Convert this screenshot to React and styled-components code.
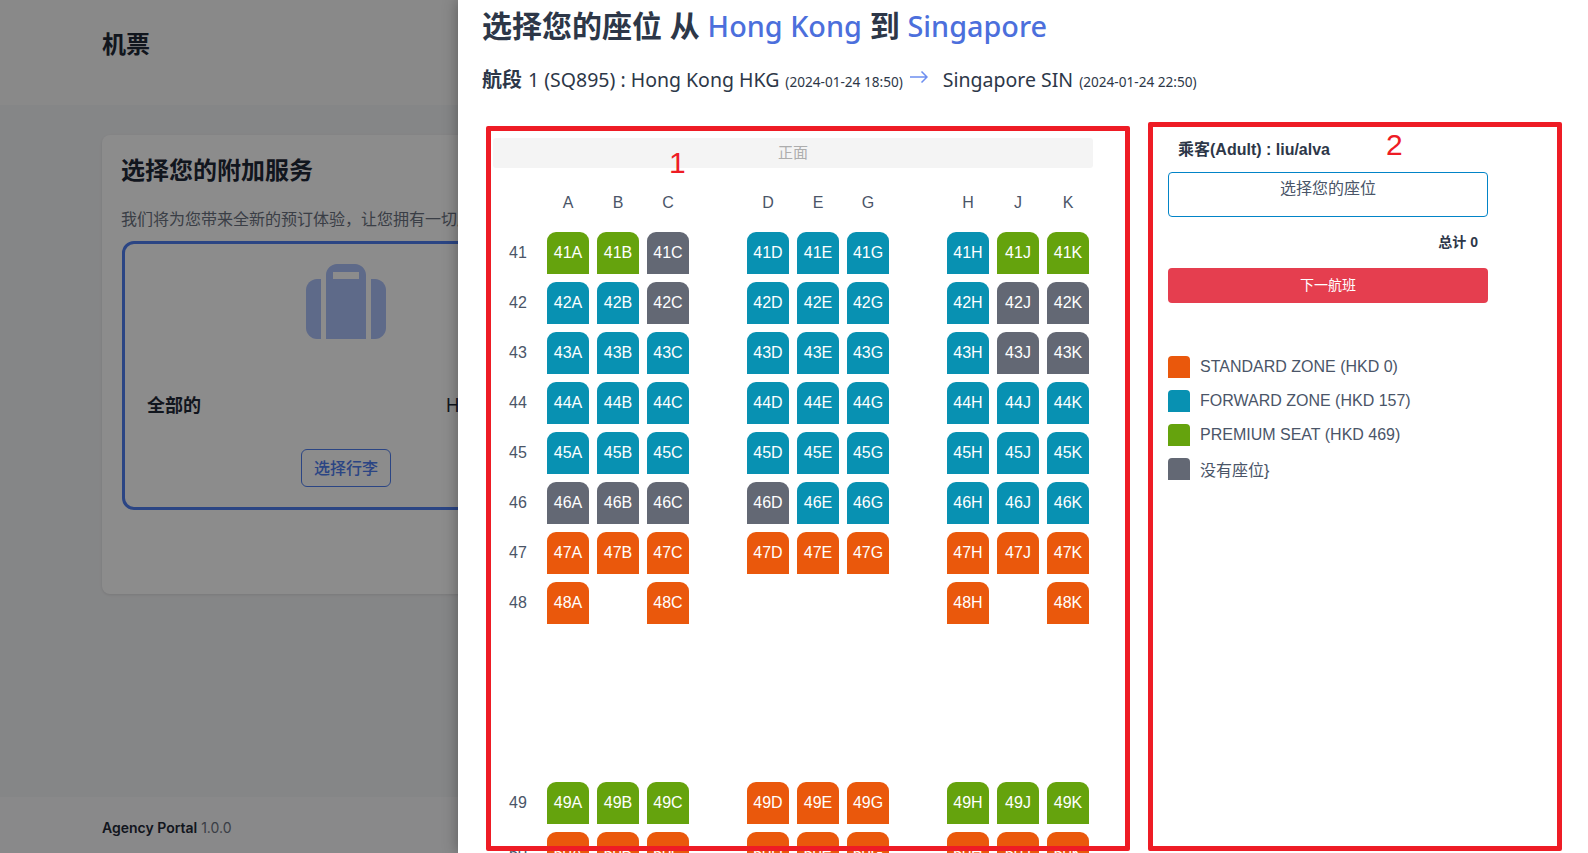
import styled, { createGlobalStyle } from "styled-components";

const SEAT_COLORS = {
  g: "#65a30d",
  t: "#0891b2",
  x: "#636874",
  o: "#ea580c",
};

const LETTERS = ["A", "B", "C", null, "D", "E", "G", null, "H", "J", "K"];

// one string per row, space = no seat, | = aisle
const ROWS = [
  { no: 41, seats: "ggx|ttt|tgg" },
  { no: 42, seats: "ttx|ttt|txx" },
  { no: 43, seats: "ttt|ttt|txx" },
  { no: 44, seats: "ttt|ttt|ttt" },
  { no: 45, seats: "ttt|ttt|ttt" },
  { no: 46, seats: "xxx|xtt|ttt" },
  { no: 47, seats: "ooo|ooo|ooo" },
  { no: 48, seats: "o o|   |o o" },
  { no: null, seats: "   |   |   " },
  { no: null, seats: "   |   |   " },
  { no: null, seats: "   |   |   " },
  { no: 49, seats: "ggg|ooo|ggg" },
  { no: 50, seats: "ooo|ooo|ooo" },
];

const LEGEND = [
  { color: "o", label: "STANDARD ZONE (HKD 0)" },
  { color: "t", label: "FORWARD ZONE (HKD 157)" },
  { color: "g", label: "PREMIUM SEAT (HKD 469)" },
  { color: "x", label: "没有座位}" },
];

function App() {
  return (
    <Screen>
      <GlobalStyle />
      <Page>
        <PageHeader>
          <PageTitle>机票</PageTitle>
        </PageHeader>
        <PageBody>
          <Card>
            <CardTitle>选择您的附加服务</CardTitle>
            <CardText>我们将为您带来全新的预订体验，让您拥有一切所需的服务</CardText>
            <ServiceBox>
              <BagIcon viewBox="0 0 80 75">
                <path d="M15 15H11C5 15 0 20 0 26V64C0 70 5 75 11 75H15Z" />
                <path fillRule="evenodd" d="M20 75V11C20 5 25 0 31 0H49C55 0 60 5 60 11V75ZM27 8V15H53V8Z" />
                <path d="M65 15H69C75 15 80 20 80 26V64C80 70 75 75 69 75H65Z" />
              </BagIcon>
              <ServiceRow>
                <ServiceName>全部的</ServiceName>
                <ServicePrice>HKD 0</ServicePrice>
              </ServiceRow>
              <BagButton>选择行李</BagButton>
            </ServiceBox>
          </Card>
        </PageBody>
        <PageFooter>
          <b>Agency Portal</b>&nbsp;1.0.0
        </PageFooter>
      </Page>
      <Overlay />
      <Drawer>
        <DrawerTitle>
          选择您的座位 从 <City>Hong Kong</City> 到 <City>Singapore</City>
        </DrawerTitle>
        <Segment>
          <b>航段</b> 1 (SQ895) : Hong Kong HKG <small>(2024-01-24 18:50)</small>
          <Arrow viewBox="0 0 18 12" fill="none">
            <path d="M0 6H17M11.5 .5L17 6L11.5 11.5" />
          </Arrow>
          Singapore SIN <small>(2024-01-24 22:50)</small>
        </Segment>
        <Columns>
          <SeatColumn>
            <Front>正面</Front>
            <SeatGrid>
              <span />
              {LETTERS.map((l, i) => (
                <HeadCell key={i}>{l}</HeadCell>
              ))}
              {ROWS.map((row, r) => (
                <SeatRow key={r} row={row} />
              ))}
            </SeatGrid>
          </SeatColumn>
          <SideColumn>
            <Passenger>乘客(Adult) : liu/alva</Passenger>
            <SeatBox>选择您的座位</SeatBox>
            <Total>总计 0</Total>
            <NextButton>下一航班</NextButton>
            <Legend>
              {LEGEND.map((item) => (
                <LegendRow key={item.label}>
                  <Swatch $kind={item.color} />
                  {item.label}
                </LegendRow>
              ))}
            </Legend>
          </SideColumn>
        </Columns>
      </Drawer>
      <MarkSeats />
      <MarkSide />
      <MarkNoSeats>1</MarkNoSeats>
      <MarkNoSide>2</MarkNoSide>
    </Screen>
  );
}

function SeatRow({ row }) {
  return (
    <>
      <HeadCell>{row.no}</HeadCell>
      {row.seats.split("").map((c, i) =>
        c === " " || c === "|" ? (
          <span key={i} />
        ) : (
          <Seat key={i} $kind={c}>
            {row.no}
            {LETTERS[i]}
          </Seat>
        )
      )}
    </>
  );
}

export default App;

const GlobalStyle = createGlobalStyle`
  html, body {
    margin: 0;
    padding: 0;
    height: 100%;
    overflow: hidden;
  }
  * {
    box-sizing: border-box;
  }
`;

const Screen = styled.div`
  position: relative;
  height: 853px;
  overflow: hidden;
  font-family: Inter, "Noto Sans CJK SC", sans-serif;
`;

const Page = styled.div`
  display: flex;
  flex-direction: column;
  height: 100%;
  background: #f3f4f6;
`;

const PageHeader = styled.header`
  display: flex;
  align-items: center;
  height: 105px;
  padding: 0 102px 21px;
  background: #fafafa;
`;

const PageTitle = styled.h1`
  margin: 0;
  font-size: 24px;
  font-weight: 700;
  color: #1f2937;
`;

const PageBody = styled.main`
  flex: 1;
  padding: 30px 102px 0;
`;

const Card = styled.section`
  height: 459px;
  padding: 20px 19px;
  border-radius: 8px;
  background: #fff;
  box-shadow: 0 1px 3px rgba(0, 0, 0, 0.1);
`;

const CardTitle = styled.h2`
  margin: 0;
  font-size: 24px;
  line-height: 32px;
  font-weight: 700;
  color: #1f2937;
`;

const CardText = styled.p`
  margin: 20px 0 0;
  font-size: 16px;
  line-height: 24px;
  white-space: nowrap;
  color: #6b7280;
`;

const ServiceBox = styled.div`
  display: flex;
  flex-direction: column;
  align-items: center;
  width: 448px;
  height: 269px;
  margin: 10px 0 0 1px;
  padding: 20px 22px;
  border: 3px solid #4f7ef0;
  border-radius: 12px;
`;

const BagIcon = styled.svg`
  flex: none;
  width: 80px;
  height: 75px;
  fill: #acc1fa;
`;

const ServiceRow = styled.div`
  display: flex;
  justify-content: space-between;
  width: 100%;
  margin-top: 53px;
`;

const ServiceName = styled.span`
  font-size: 18px;
  line-height: 28px;
  font-weight: 700;
  color: #1f2937;
`;

const ServicePrice = styled.span`
  width: 99px;
  font-size: 18px;
  line-height: 28px;
  color: #1f2937;
`;

const BagButton = styled.button`
  width: 90px;
  height: 38px;
  margin-top: 29px;
  padding: 0 0 2px;
  border: 1px solid #4f7ef0;
  border-radius: 6px;
  background: transparent;
  font: inherit;
  font-size: 16px;
  font-weight: 500;
  color: #4f7ef0;
`;

const PageFooter = styled.footer`
  display: flex;
  align-items: center;
  height: 56px;
  padding: 4px 102px 0;
  background: #f9fafb;
  font-size: 14px;
  color: #6b7280;

  b {
    font-weight: 600;
    color: #1f2937;
  }
`;

const Overlay = styled.div`
  position: absolute;
  inset: 0;
  background: rgba(0, 0, 0, 0.45);
`;

const Drawer = styled.aside`
  position: absolute;
  top: 0;
  right: 0;
  bottom: 0;
  width: 1130px;
  padding: 8px 0 0 24px;
  overflow: hidden;
  background: #fff;
  box-shadow: 0 0 14px rgba(0, 0, 0, 0.35);
  font-family: "Noto Sans", "Noto Sans CJK SC", sans-serif;
`;

const DrawerTitle = styled.h2`
  height: 36px;
  margin: 0;
  font-size: 30px;
  line-height: 36px;
  font-weight: 600;
  color: #2d3748;
  white-space: nowrap;
`;

const City = styled.span`
  font-size: 28.8px;
  font-weight: 500;
  color: #4c6fdc;
`;

const Segment = styled.div`
  display: flex;
  align-items: baseline;
  gap: 6px;
  height: 28px;
  margin-top: 22px;
  font-size: 19.5px;
  line-height: 28px;
  color: #2d3748;
  white-space: nowrap;

  b {
    font-size: 20px;
    font-weight: 700;
  }

  small {
    font-size: 13.6px;
  }
`;

const Arrow = styled.svg`
  align-self: center;
  width: 18px;
  height: 12px;
  margin: 0 9px 6px 1px;
  stroke: #6d8ff0;
  stroke-width: 1.5;
`;

const Columns = styled.div`
  display: flex;
  gap: 75px;
  margin: 44px 0 0 11px;
`;

const SeatColumn = styled.div`
  width: 600px;
`;

const Front = styled.div`
  height: 30px;
  border-radius: 3px;
  background: #f4f4f4;
  font-size: 15px;
  line-height: 28px;
  text-align: center;
  color: #adadad;
`;

const SeatGrid = styled.div`
  display: grid;
  grid-template-columns: repeat(12, 42px);
  grid-auto-rows: 42px;
  gap: 8px;
  margin: 14px 0 0 4px;
  font-family: "Liberation Sans", sans-serif;
`;

const HeadCell = styled.div`
  display: flex;
  align-items: center;
  justify-content: center;
  font-size: 16px;
  color: #4a5568;
`;

const Seat = styled.div`
  display: flex;
  align-items: center;
  justify-content: center;
  border-radius: 9px 9px 0 0;
  background: ${(p) => SEAT_COLORS[p.$kind]};
  font-size: 16px;
  color: #fff;
`;

const SideColumn = styled.div`
  display: flex;
  flex-direction: column;
  width: 320px;
  font-family: "Liberation Sans", "Noto Sans CJK SC", sans-serif;
`;

const Passenger = styled.div`
  height: 24px;
  padding-left: 10px;
  font-size: 16px;
  line-height: 24px;
  font-weight: 700;
  color: #2d3748;
`;

const SeatBox = styled.div`
  height: 45px;
  margin-top: 10px;
  padding-top: 4px;
  border: 1px solid #0284c7;
  border-radius: 4px;
  font-size: 16px;
  line-height: 24px;
  text-align: center;
  color: #4a5568;
`;

const Total = styled.div`
  height: 20px;
  margin-top: 15px;
  padding-right: 10px;
  font-size: 14px;
  line-height: 20px;
  font-weight: 700;
  text-align: right;
  color: #2d3748;
`;

const NextButton = styled.button`
  height: 35px;
  margin-top: 16px;
  padding: 0 0 4px;
  border: 0;
  border-radius: 4px;
  background: #e53e4f;
  font: inherit;
  font-size: 14px;
  color: #fff;
`;

const Legend = styled.div`
  display: flex;
  flex-direction: column;
  gap: 12px;
  margin-top: 53px;
`;

const LegendRow = styled.div`
  display: flex;
  align-items: center;
  gap: 10px;
  height: 22px;
  font-size: 16px;
  color: #4a5568;
`;

const Swatch = styled.span`
  width: 22px;
  height: 22px;
  border-radius: 4px 4px 0 0;
  background: ${(p) => SEAT_COLORS[p.$kind]};
`;

// the red marks someone drew over the screenshot
const MarkBox = styled.div`
  position: absolute;
  border: 5px solid #ee1c25;
  border-radius: 2px;
  pointer-events: none;
`;

const MarkSeats = styled(MarkBox)`
  left: 486px;
  top: 126px;
  width: 644px;
  height: 725px;
`;

const MarkSide = styled(MarkBox)`
  left: 1148px;
  top: 122px;
  width: 414px;
  height: 729px;
`;

const MarkNo = styled.div`
  position: absolute;
  font-family: "Liberation Sans", sans-serif;
  font-size: 30px;
  line-height: 30px;
  color: #ee1c25;
`;

const MarkNoSeats = styled(MarkNo)`
  left: 669px;
  top: 148px;
`;

const MarkNoSide = styled(MarkNo)`
  left: 1386px;
  top: 130px;
`;
